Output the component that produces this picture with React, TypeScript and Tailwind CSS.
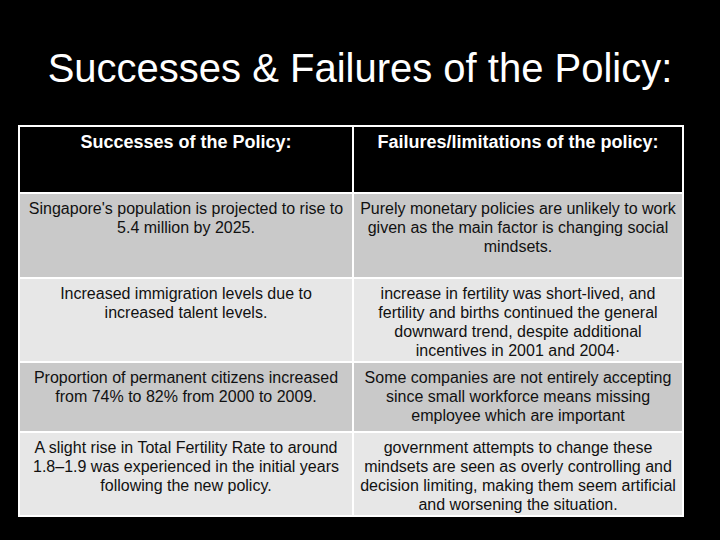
import React from "react";

const rows: { left: string; right: string; bg: string }[] = [
  {
    left: "Singapore's population is projected to rise to 5.4 million by 2025.",
    right: "Purely monetary policies are unlikely to work given as the main factor is changing social mindsets.",
    bg: "bg-[#c9c9c9]",
  },
  {
    left: "Increased immigration levels due to increased talent levels.",
    right: "increase in fertility was short-lived, and fertility and births continued the general downward trend, despite additional incentives in 2001 and 2004·",
    bg: "bg-[#e7e7e7]",
  },
  {
    left: "Proportion of permanent citizens increased from 74% to 82% from 2000 to 2009.",
    right: "Some companies are not entirely accepting since small workforce means missing employee which are important",
    bg: "bg-[#c9c9c9]",
  },
  {
    left: "A slight rise in Total Fertility Rate to around 1.8–1.9 was experienced in the initial years following the new policy.",
    right: "government attempts to change these mindsets are seen as overly controlling and decision limiting, making them seem artificial and worsening the situation.",
    bg: "bg-[#e7e7e7]",
  },
];

export default function App() {
  return (
    <div
      className="w-[720px] h-[540px] bg-black overflow-hidden"
      style={{ fontFamily: '"Liberation Sans", Arial, sans-serif' }}
    >
      <div className="pt-[45px] h-[91px]">
        <h1 className="text-white text-center text-[40px] leading-[46px] font-normal">
          Successes &amp; Failures of the Policy:
        </h1>
      </div>
      <div className="mt-[34px] ml-[18px] w-[666px] bg-white p-[2px] grid grid-cols-[332px_328px] grid-rows-[65px_83px_82px_68px_82px] gap-[2px]">
        <div className="bg-black text-white font-bold text-[18px] leading-[22px] text-center pt-[4px] px-[4px]">
          Successes of the Policy:
        </div>
        <div className="bg-black text-white font-bold text-[18px] leading-[22px] text-center pt-[4px] px-[4px]">
          Failures/limitations of the policy:
        </div>
        {rows.map((r, i) => (
          <React.Fragment key={i}>
            <div className={`${r.bg} text-[#111] text-[16px] leading-[19px] text-center pt-[5px] px-[5px]`}>
              {r.left}
            </div>
            <div className={`${r.bg} text-[#111] text-[16px] leading-[19px] text-center pt-[5px] px-[5px]`}>
              {r.right}
            </div>
          </React.Fragment>
        ))}
      </div>
    </div>
  );
}
